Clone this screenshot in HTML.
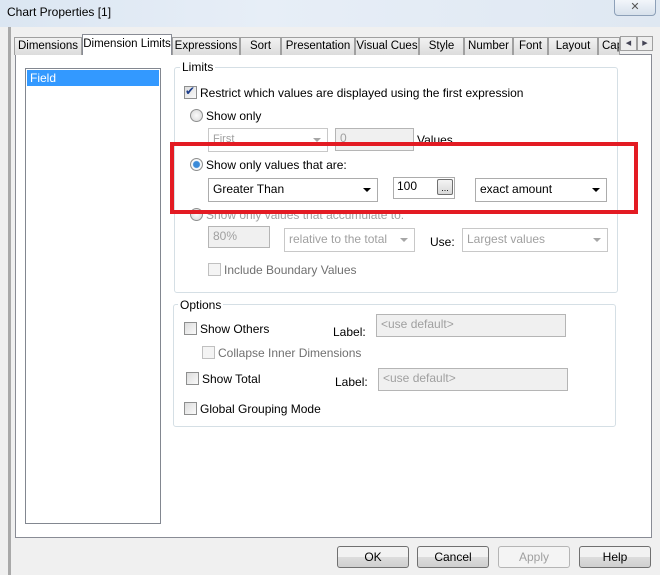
<!DOCTYPE html>
<html><head><style>
*{box-sizing:border-box;margin:0;padding:0}
body{width:660px;height:575px;position:relative;overflow:hidden;background:#f0f0f0;font-family:"Liberation Sans",Arial,sans-serif;font-size:12px;color:#000}
.a{position:absolute}
.t{position:absolute;white-space:nowrap;line-height:14px}
.tab{position:absolute;top:37px;height:18px;border:1px solid #a0a0a0;border-bottom:none;background:linear-gradient(#f2f2f2,#dcdcdc);text-align:center;line-height:16px;font-size:11.5px;white-space:nowrap;overflow:hidden}
.cb{position:absolute;width:13px;height:13px;border:1px solid #8e8f8f;background:linear-gradient(135deg,#dcdcdc,#fafafa)}
.rb{position:absolute;width:13px;height:13px;border:1px solid #8e8f8f;border-radius:50%;background:radial-gradient(#fbfbfb,#d6d6d6)}
.dd{position:absolute;border:1px solid #acacac;background:#fff;padding-left:4px;line-height:20px}
.dd:after{content:"";position:absolute;right:6px;top:9px;border-left:4px solid transparent;border-right:4px solid transparent;border-top:4px solid #000}
.dis{color:#a0a0a0;border-color:#c8c8c8}
.dis:after{border-top-color:#a6a6a6}
.ed{position:absolute;border:1px solid #b5b5b5;background:#f0f0f0;color:#a0a0a0;padding-left:4px;line-height:18px}
.grp{position:absolute;border:1px solid #d5dfe5;border-radius:3px}
.btn{position:absolute;top:546px;width:72px;height:22px;border:1px solid #707070;border-radius:3px;background:linear-gradient(#f2f2f2 50%,#dddddd 50%,#cfcfcf);text-align:center;line-height:20px}
</style></head><body>
<div class="a" style="left:0;top:0;width:660px;height:27px;background:linear-gradient(90deg,#dbe6f2,#e7eef7 40%,#dfe8f2)"></div>
<div class="t" style="left:7px;top:5px;font-size:12px">Chart Properties [1]</div>
<div class="a" style="left:614px;top:-2px;width:42px;height:18px;border:1px solid #8da0b8;border-radius:0 0 4px 4px;background:linear-gradient(#f4f7fb,#d7e1ec);text-align:center;font-size:11px;color:#555;line-height:16px">✕</div>
<div class="a" style="left:8px;top:27px;width:3px;height:548px;background:#7a7a7a;opacity:.6"></div>
<div class="a" style="left:11px;top:27px;width:649px;height:548px;background:#f0f0f0"></div>
<!-- tab panel -->
<div class="a" style="left:15px;top:54px;width:637px;height:484px;border:1px solid #898c95;background:#fff"></div>
<div class="tab" style="left:14px;width:68px">Dimensions</div>
<div class="tab" style="left:82px;top:34px;width:90px;height:21px;background:#fff;z-index:2;border-color:#898c95;line-height:18px">Dimension Limits</div>
<div class="tab" style="left:172px;width:68px">Expressions</div>
<div class="tab" style="left:240px;width:41px">Sort</div>
<div class="tab" style="left:281px;width:74px">Presentation</div>
<div class="tab" style="left:355px;width:64px">Visual Cues</div>
<div class="tab" style="left:419px;width:45px">Style</div>
<div class="tab" style="left:464px;width:49px">Number</div>
<div class="tab" style="left:513px;width:35px">Font</div>
<div class="tab" style="left:548px;width:50px">Layout</div>
<div class="tab" style="left:598px;width:22px;text-align:left;padding-left:3px">Cap</div>
<div class="a" style="left:620px;top:36px;width:17px;height:15px;border:1px solid #a0a0a0;background:#eee;font-size:7px;text-align:center;line-height:13px;color:#445">◀</div>
<div class="a" style="left:637px;top:36px;width:16px;height:15px;border:1px solid #a0a0a0;background:#eee;font-size:7px;text-align:center;line-height:13px;color:#445">▶</div>
<!-- field list -->
<div class="a" style="left:25px;top:68px;width:136px;height:456px;border:1px solid #828790;background:#fff"></div>
<div class="a" style="left:27px;top:70px;width:132px;height:16px;background:#3399ff"></div>
<div class="t" style="left:30px;top:71px;color:#fff">Field</div>
<!-- Limits -->
<div class="grp" style="left:174px;top:67px;width:444px;height:226px"></div>
<div class="t" style="left:180px;top:60px;background:#fff;padding:0 2px">Limits</div>
<div class="cb" style="left:184px;top:86px"></div>
<div class="t" style="left:185px;top:84px;font-size:12px;color:#1c3d8a">✔</div>
<div class="t" style="left:200px;top:86px">Restrict which values are displayed using the first expression</div>
<div class="rb" style="left:190px;top:109px"></div>
<div class="t" style="left:206px;top:109px">Show only</div>
<div class="dd dis" style="left:208px;top:128px;width:120px;height:24px;font-size:11px">First</div>
<div class="ed" style="left:335px;top:128px;width:79px;height:23px">0</div>
<div class="t" style="left:417px;top:133px">Values</div>
<div class="rb" style="left:190px;top:158px;background:radial-gradient(#3a8ad8 0 3px,#fff 4px,#d6d6d6)"></div>
<div class="t" style="left:206px;top:158px">Show only values that are:</div>
<div class="dd" style="left:208px;top:178px;width:170px;height:24px">Greater Than</div>
<div class="a" style="left:393px;top:177px;width:62px;height:22px;border:1px solid #acacac;background:#fff;padding-left:3px;line-height:16px">100</div>
<div class="a" style="left:437px;top:179px;width:16px;height:16px;border:1px solid #707070;border-radius:2px;background:linear-gradient(#f4f4f4,#d8d8d8);font-size:9px;text-align:center;line-height:16px">...</div>
<div class="dd" style="left:475px;top:178px;width:132px;height:24px">exact amount</div>
<div class="rb" style="left:190px;top:208px"></div>
<div class="t" style="left:206px;top:208px;color:#a0a0a0">Show only values that accumulate to:</div>
<div class="ed" style="left:208px;top:226px;width:62px;height:22px">80%</div>
<div class="dd dis" style="left:284px;top:228px;width:131px;height:24px">relative to the total</div>
<div class="t" style="left:430px;top:235px">Use:</div>
<div class="dd dis" style="left:462px;top:228px;width:146px;height:24px">Largest values</div>
<div class="cb" style="left:208px;top:263px;border-color:#c0c0c0;background:#f4f4f4"></div>
<div class="t" style="left:224px;top:263px;color:#707070">Include Boundary Values</div>
<!-- red box -->
<div class="a" style="left:170px;top:142px;width:468px;height:72px;border:4px solid #e31b23"></div>
<!-- Options -->
<div class="grp" style="left:173px;top:304px;width:443px;height:123px"></div>
<div class="t" style="left:178px;top:298px;background:#fff;padding:0 2px">Options</div>
<div class="cb" style="left:184px;top:322px"></div>
<div class="t" style="left:200px;top:322px">Show Others</div>
<div class="t" style="left:333px;top:325px">Label:</div>
<div class="ed" style="left:376px;top:314px;width:190px;height:23px">&lt;use default&gt;</div>
<div class="cb" style="left:202px;top:346px;border-color:#c0c0c0;background:#f4f4f4"></div>
<div class="t" style="left:218px;top:346px;color:#707070">Collapse Inner Dimensions</div>
<div class="cb" style="left:186px;top:372px"></div>
<div class="t" style="left:202px;top:372px">Show Total</div>
<div class="t" style="left:335px;top:375px">Label:</div>
<div class="ed" style="left:378px;top:368px;width:190px;height:23px">&lt;use default&gt;</div>
<div class="cb" style="left:184px;top:402px"></div>
<div class="t" style="left:200px;top:402px">Global Grouping Mode</div>
<!-- buttons -->
<div class="btn" style="left:337px">OK</div>
<div class="btn" style="left:417px">Cancel</div>
<div class="btn" style="left:498px;border-color:#b5b5b5;background:#f4f4f4;color:#a0a0a0">Apply</div>
<div class="btn" style="left:579px">Help</div>
</body></html>
